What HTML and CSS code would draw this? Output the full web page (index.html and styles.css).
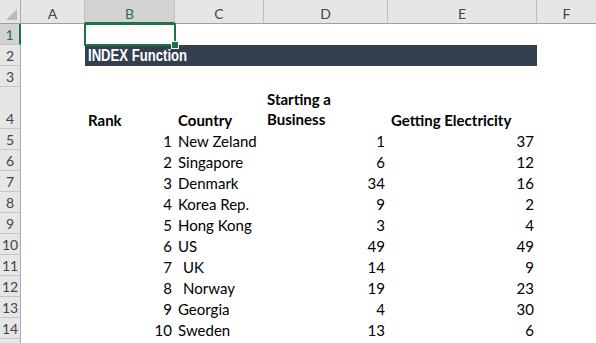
FILE: index.html
```html
<!DOCTYPE html>
<html>
<head>
<meta charset="utf-8">
<link rel="stylesheet" href="styles.css">
</head>
<body>
<div class="sheet">
  <div class="corner"><span class="tri"></span></div>
  <div class="ch">A</div><div class="ch sel">B</div><div class="ch">C</div><div class="ch">D</div><div class="ch">E</div><div class="ch last">F</div>

  <div class="rh sel">1</div><div class="c"></div><div class="c"></div><div class="c"></div><div class="c"></div><div class="c"></div><div class="c"></div>

  <div class="rh">2</div><div class="c"></div><div class="title"><span class="title-text">INDEX Function</span></div><div class="c"></div>

  <div class="rh">3</div><div class="c"></div><div class="c"></div><div class="c"></div><div class="c"></div><div class="c"></div><div class="c"></div>

  <div class="rh">4</div><div class="c"></div><div class="c b">Rank</div><div class="c b">Country</div><div class="c b wrap">Starting a<br>Business</div><div class="c b">Getting Electricity</div><div class="c"></div>

  <div class="rh">5</div><div class="c"></div><div class="c r">1</div><div class="c">New Zeland</div><div class="c r">1</div><div class="c r">37</div><div class="c"></div>
  <div class="rh">6</div><div class="c"></div><div class="c r">2</div><div class="c">Singapore</div><div class="c r">6</div><div class="c r">12</div><div class="c"></div>
  <div class="rh">7</div><div class="c"></div><div class="c r">3</div><div class="c">Denmark</div><div class="c r">34</div><div class="c r">16</div><div class="c"></div>
  <div class="rh">8</div><div class="c"></div><div class="c r">4</div><div class="c">Korea Rep.</div><div class="c r">9</div><div class="c r">2</div><div class="c"></div>
  <div class="rh">9</div><div class="c"></div><div class="c r">5</div><div class="c">Hong Kong</div><div class="c r">3</div><div class="c r">4</div><div class="c"></div>
  <div class="rh">10</div><div class="c"></div><div class="c r">6</div><div class="c">US</div><div class="c r">49</div><div class="c r">49</div><div class="c"></div>
  <div class="rh">11</div><div class="c"></div><div class="c r">7</div><div class="c sp">UK</div><div class="c r">14</div><div class="c r">9</div><div class="c"></div>
  <div class="rh">12</div><div class="c"></div><div class="c r">8</div><div class="c sp">Norway</div><div class="c r">19</div><div class="c r">23</div><div class="c"></div>
  <div class="rh">13</div><div class="c"></div><div class="c r">9</div><div class="c">Georgia</div><div class="c r">4</div><div class="c r">30</div><div class="c"></div>
  <div class="rh">14</div><div class="c"></div><div class="c r">10</div><div class="c">Sweden</div><div class="c r">13</div><div class="c r">6</div><div class="c"></div>
  <div class="rh"></div><div class="c"></div><div class="c"></div><div class="c"></div><div class="c"></div><div class="c"></div><div class="c"></div>

  <div class="selbox"><span class="handle"></span></div>
</div>
</body>
</html>
```

FILE: styles.css
```css
html, body {
  margin: 0;
  padding: 0;
  background: #ffffff;
  overflow: hidden;
}
.sheet {
  position: relative;
  display: grid;
  grid-template-columns: 21px 64px 90px 89px 124px 149px 59px;
  grid-template-rows: 24px 21px 21px 21px 42px repeat(10, 21px) 21px;
  width: 596px;
  height: 343px;
  overflow: hidden;
  font-family: "Lato", "Liberation Sans", sans-serif;
  font-size: 15px;
  color: #000;
}
.corner {
  position: relative;
  background: #e6e6e6;
  border-right: 1px solid #ababab;
  border-bottom: 1px solid #9f9f9f;
}
.tri {
  position: absolute;
  right: 3px;
  bottom: 3px;
  width: 0;
  height: 0;
  border-left: 11px solid transparent;
  border-bottom: 11px solid #b9b9b9;
}
.ch {
  background: #e6e6e6;
  border-bottom: 1px solid #9f9f9f;
  border-right: 1px solid #c0c0c0;
  color: #444;
  display: flex;
  align-items: center;
  justify-content: center;
  padding-top: 4px;
  font-size: 14px;
}
.ch.last { border-right: none; }
.ch.sel {
  background: #d2d2d2;
  color: #217346;
  border-bottom: 2px solid #217346;
}
.rh {
  background: #e6e6e6;
  border-right: 1px solid #ababab;
  border-bottom: 1px solid #c6c6c6;
  color: #444;
  display: flex;
  align-items: flex-end;
  justify-content: center;
  padding-bottom: 0;
  font-size: 14px;
  line-height: 18px;
}
.rh.sel {
  background: #d2d2d2;
  color: #217346;
  border-right: 2px solid #217346;
}
.c {
  display: flex;
  align-items: flex-end;
  padding: 0 3px 0 3px;
  line-height: 18px;
  white-space: nowrap;
  min-width: 0;
}
.c.r { justify-content: flex-end; }
.c.b { font-weight: bold; }
.c.wrap { line-height: 20px; }
.c.sp { padding-left: 8px; }
.title {
  grid-column: span 4;
  background: #333f4f;
  color: #ffffff;
  font-family: "Liberation Sans", Arial, sans-serif;
  font-weight: bold;
  font-size: 16px;
  display: flex;
  align-items: center;
  padding: 1px 3px 0 3px;
  white-space: nowrap;
}
.title-text {
  display: inline-block;
  transform: scaleX(0.82);
  transform-origin: left center;
}
.selbox {
  position: absolute;
  left: 84px;
  top: 23px;
  width: 88px;
  height: 19px;
  border: 2px solid #217346;
}
.handle {
  position: absolute;
  right: -5px;
  bottom: -5px;
  width: 6px;
  height: 6px;
  background: #217346;
  border: 1px solid #ffffff;
}
```
